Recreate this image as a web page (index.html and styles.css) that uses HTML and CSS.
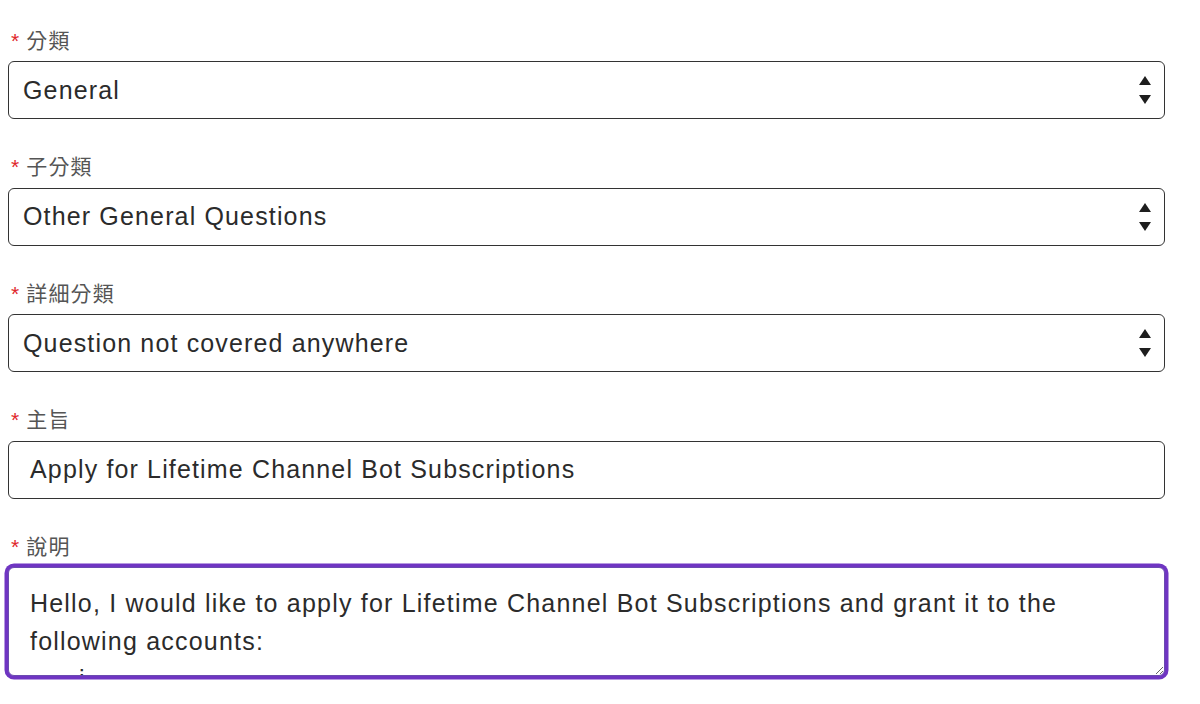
FILE: index.html
```html
<!DOCTYPE html>
<html lang="zh-Hant">
<head>
<meta charset="utf-8">
<link rel="stylesheet" href="styles.css">
</head>
<body>
<form class="form">
  <div class="field">
    <label class="label"><span class="req">*</span>分類</label>
    <div class="select">
      <span class="value">General</span>
      <svg class="arrows" width="12" height="28" viewBox="0 0 12 28"><path d="M6 0 L12 9 L0 9 Z" fill="#1e1e1e"/><path d="M0 19 L12 19 L6 28 Z" fill="#1e1e1e"/></svg>
    </div>
  </div>
  <div class="field">
    <label class="label"><span class="req">*</span>子分類</label>
    <div class="select">
      <span class="value">Other General Questions</span>
      <svg class="arrows" width="12" height="28" viewBox="0 0 12 28"><path d="M6 0 L12 9 L0 9 Z" fill="#1e1e1e"/><path d="M0 19 L12 19 L6 28 Z" fill="#1e1e1e"/></svg>
    </div>
  </div>
  <div class="field">
    <label class="label"><span class="req">*</span>詳細分類</label>
    <div class="select">
      <span class="value">Question not covered anywhere</span>
      <svg class="arrows" width="12" height="28" viewBox="0 0 12 28"><path d="M6 0 L12 9 L0 9 Z" fill="#1e1e1e"/><path d="M0 19 L12 19 L6 28 Z" fill="#1e1e1e"/></svg>
    </div>
  </div>
  <div class="field">
    <label class="label"><span class="req">*</span>主旨</label>
    <div class="input">Apply for Lifetime Channel Bot Subscriptions</div>
  </div>
  <div class="field">
    <label class="label"><span class="req">*</span>說明</label>
    <textarea class="textarea">Hello, I would like to apply for Lifetime Channel Bot Subscriptions and grant it to the following accounts:
      i
</textarea>
  </div>
</form>
</body>
</html>
```
FILE: styles.css
```css
html, body {
  margin: 0;
  background: #fff;
}
body {
  padding: 26px 35px 0 8px;
  font-family: "Liberation Sans", "Noto Sans CJK TC", sans-serif;
  color: #333;
}
.form {
  display: flex;
  flex-direction: column;
  width: 1157px;
}
.field {
  display: flex;
  flex-direction: column;
  margin-bottom: 33.5px;
}
.label {
  box-sizing: border-box;
  display: flex;
  align-items: center;
  height: 28px;
  padding-bottom: 3px;
  font-size: 21px;
  letter-spacing: 1.2px;
  color: #555;
  margin-bottom: 7px;
  font-family: "Noto Sans CJK TC", "Liberation Sans", sans-serif;
}
.req {
  color: #e0262b;
  font-family: "Liberation Sans", sans-serif;
  font-size: 21px;
  letter-spacing: 0;
  margin: 0 7px 0 3px;
  position: relative;
  top: 2px;
}
.select, .input {
  box-sizing: border-box;
  height: 58px;
  border: 1.5px solid #333;
  border-radius: 6px;
  display: flex;
  align-items: center;
  font-size: 25px;
  letter-spacing: 1.15px;
  color: #2b2b2b;
}
.select {
  padding: 0 13px 0 14px;
  justify-content: space-between;
}
.input {
  padding: 0 21px;
}
.arrows {
  display: block;
}
.textarea {
  box-sizing: border-box;
  height: 109px;
  width: 1157px;
  margin: 0;
  border: 1px solid #6b4bb0;
  border-radius: 6px;
  box-shadow: 0 0 0 3.5px #6f35c2;
  outline: none;
  padding: 16px 21px 0 21px;
  font-family: "Liberation Sans", "Noto Sans CJK TC", sans-serif;
  font-size: 25px;
  letter-spacing: 1.2px;
  line-height: 38px;
  color: #2b2b2b;
  overflow: hidden;
  resize: vertical;
}
```
